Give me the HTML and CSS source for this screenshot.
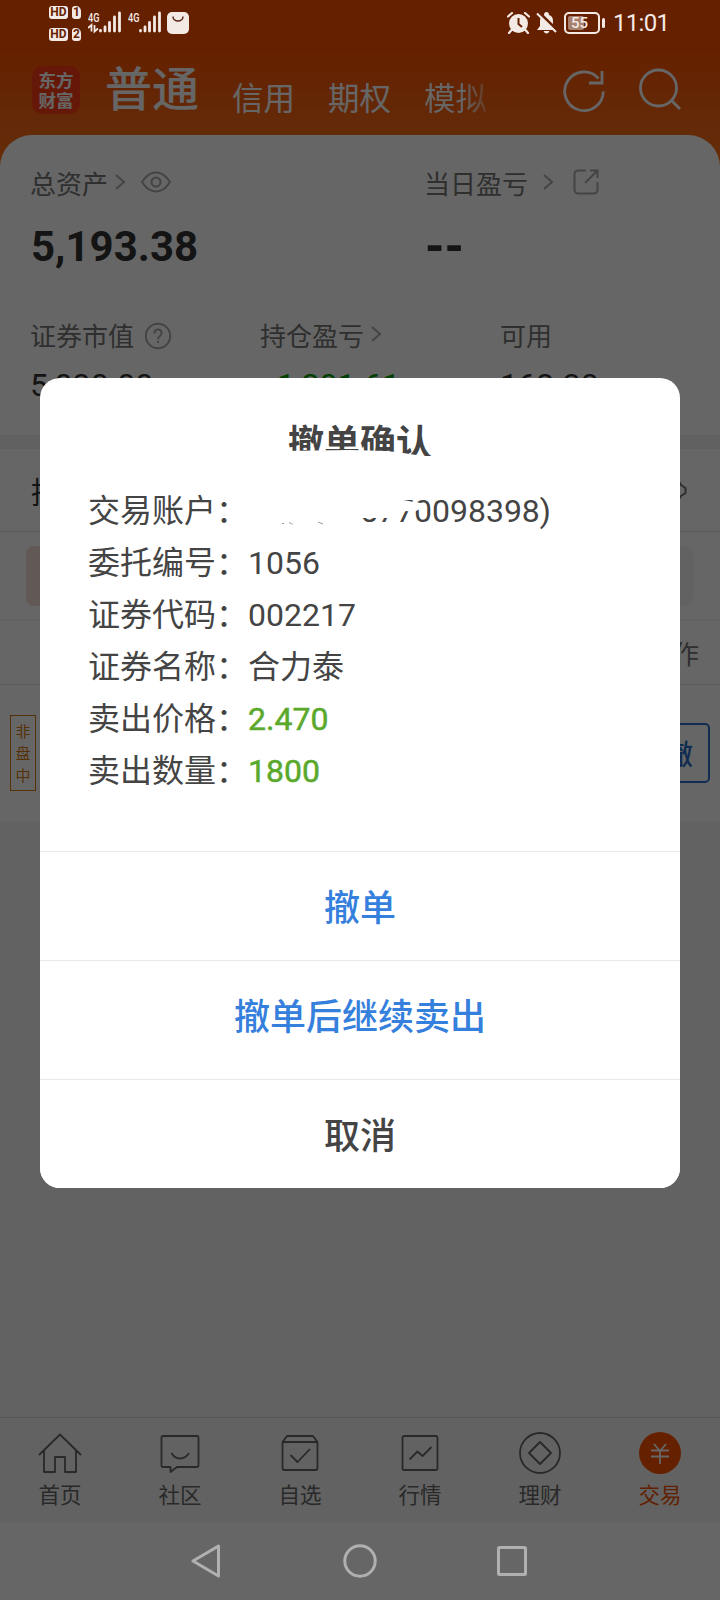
FILE: index.html
```html
<!DOCTYPE html>
<html lang="zh-CN">
  <head>
    <meta charset="UTF-8" />
    <meta name="viewport" content="width=device-width, initial-scale=1.0" />
    <title>撤单确认</title>
    <link rel="stylesheet" href="styles.css">
  </head>
  <body>
    <div class="phone">
      <div class="status-bar">
        <div class="hd-list">
          <div class="hd-row"><span class="hd">HD</span><span class="sim">1</span></div>
          <div class="hd-row"><span class="hd">HD</span><span class="sim">2</span></div>
        </div>
        <svg class="signal" width="34" height="24" viewBox="0 0 34 24">
          <text x="0" y="10.500" class="net" textLength="11.500" lengthAdjust="spacingAndGlyphs">4G</text>
          <path d="M0 17l3.500-3v6.500M6.500 14v6.500l3.500-3" fill="none" stroke="#f3e9e5" stroke-width="1.800" />
          <path d="M12.500 19.500v.5M17 16v4M21.500 11.500v8.500M26.500 6v14M31.500 2v18" class="bars" />
        </svg>
        <svg class="signal second" width="34" height="24" viewBox="0 0 34 24">
          <text x="0" y="10.500" class="net" textLength="11.500" lengthAdjust="spacingAndGlyphs">4G</text>
          <path d="M12.500 19.500v.5M17 16v4M21.500 11.500v8.500M26.500 6v14M31.500 2v18" class="bars" />
        </svg>
        <svg class="bag" width="22" height="22" viewBox="0 0 22 22">
          <rect width="22" height="22" rx="5" fill="#f3e9e5" />
          <path d="M6 4.500a5 4.500 0 0 0 10 0" fill="none" stroke="#5a2410" stroke-width="1.500" />
        </svg>
        <div class="status-right">
          <svg width="23" height="22" viewBox="0 0 23 22">
            <circle cx="11.500" cy="11.500" r="9.500" fill="#f3e9e5" />
            <path d="M1 4.500l4-3.500M22 4.500L18 1M4.500 18L2 21M18.500 18l2.500 3" stroke="#f3e9e5" stroke-width="2.200" stroke-linecap="round" />
            <path d="M11.500 6v6l3.500 3" fill="none" stroke="#662100" stroke-width="2" />
          </svg>
          <svg width="21" height="22" viewBox="0 0 21 22">
            <path d="M8 3Q8 0 10.500 0T13 3Q17 4 17 9v5l3 4H1l3-4V9q0-5 4-6z" fill="#f3e9e5" />
            <path d="M7.500 19h6q-1 2.500-3 2.500t-3-2.500z" fill="#f3e9e5" />
            <path d="M2.500 0L21 18" stroke="#662100" stroke-width="3" />
            <path d="M1 1.500L20 20" stroke="#f3e9e5" stroke-width="2" />
          </svg>
          <div class="battery"><span class="battery-level"></span><span class="battery-text">55</span></div>
          <span class="battery-tip"></span>
          <span class="time">11:01</span>
        </div>
      </div>

      <div class="header">
        <div class="logo"><span>东方</span><span>财富</span></div>
        <div class="tabs">
          <span class="tab active">普通</span>
          <span class="tab">信用</span>
          <span class="tab">期权</span>
          <span class="tab fade">模拟</span>
        </div>
        <svg class="refresh" width="44" height="44" viewBox="0 0 44 44">
          <path d="M36.500 9.500A19.300 19.300 0 1 0 41.300 22.500M40 2v12H27" />
        </svg>
        <svg class="search" width="44" height="44" viewBox="0 0 44 44">
          <circle cx="20.500" cy="20" r="18" />
          <path d="M33 32l9 9" />
        </svg>
      </div>

      <div class="assets">
        <div class="assets-top">
          <div class="asset total">
            <div class="label">总资产
              <svg class="arrow" width="12" height="18" viewBox="0 0 12 18"><path d="M2 2l8 7-8 7" /></svg>
              <svg class="eye" width="32" height="22" viewBox="0 0 32 22">
                <path d="M2 11Q8 1.500 16 1.500t14 9.500q-6 9.500-14 9.500T2 11z" /><circle cx="16" cy="11" r="4.500" />
              </svg>
            </div>
            <div class="big">5,193.38</div>
          </div>
          <div class="asset">
            <div class="label">当日盈亏
              <svg class="arrow wide" width="12" height="18" viewBox="0 0 12 18"><path d="M2 2l8 7-8 7" /></svg>
              <svg class="share" width="26" height="26" viewBox="0 0 26 26">
                <path d="M13 1.500H5A3.500 3.500 0 0 0 1.500 5v16A3.500 3.500 0 0 0 5 24.500h16a3.500 3.500 0 0 0 3.500-3.500v-8M12 14L24.500 1.500M17 1.500h7.500V9" />
              </svg>
            </div>
            <div class="big dashes">--</div>
          </div>
        </div>
        <div class="assets-bottom">
          <div>
            <div class="label">证券市值
              <svg class="help" width="28" height="28" viewBox="0 0 28 28">
                <circle cx="14" cy="14" r="12.200" />
                <path d="M10.500 11.500q0-4 3.500-4t3.500 3.500q0 2-2 3.300-1.500 1-1.500 3.200M14 19v2" />
              </svg>
            </div>
            <div class="value">5,030.00</div>
          </div>
          <div>
            <div class="label">持仓盈亏
              <svg class="arrow" width="12" height="18" viewBox="0 0 12 18"><path d="M2 2l8 7-8 7" /></svg>
            </div>
            <div class="value green">-1,201.61</div>
          </div>
          <div>
            <div class="label">可用</div>
            <div class="value">163.38</div>
          </div>
        </div>
      </div>

      <div class="section-title">
        <span>持仓</span>
        <svg width="28" height="28" viewBox="0 0 28 28"><path d="M2 14l4-9 8-3 7 5 1 2 4.500 3v5L22 20l-2 3-6 3-8-3z" /></svg>
      </div>
      <div class="filters"><span class="chip selected"></span><span class="chip"></span></div>
      <div class="table-head">操作</div>
      <div class="order-row">
        <div class="tag"><span>非</span><span>盘</span><span>中</span></div>
        <div class="cancel-btn">撤</div>
      </div>
      <div class="blank"></div>

      <div class="tabbar">
        <div class="item">
          <svg width="44" height="44" viewBox="0 0 44 44"><path d="M1 23L22 2.500 43 23M6 19v21h11V25h10v15h11V19" /></svg>
          <span>首页</span>
        </div>
        <div class="item">
          <svg width="44" height="44" viewBox="0 0 44 44"><path d="M5 4h34q1.500 0 1.500 1.500v28q0 1.500-1.500 1.500H19l-6.500 5v-5H5q-1.500 0-1.500-1.500v-28Q3.500 4 5 4zM13.500 21q3 5.500 8.500 5.500t9-5.500" /></svg>
          <span>社区</span>
        </div>
        <div class="item">
          <svg width="44" height="44" viewBox="0 0 44 44"><path d="M4.500 10L9 4h26l4.500 6v26q0 2-2 2h-31q-2 0-2-2zM4.500 10h35M12.500 23l7 7L32 17" /></svg>
          <span>自选</span>
        </div>
        <div class="item">
          <svg width="44" height="44" viewBox="0 0 44 44"><rect x="4.500" y="4" width="35" height="34" rx="1.500" /><path d="M11.500 27.500l8-8 5 4.500 9-9" /></svg>
          <span>行情</span>
        </div>
        <div class="item">
          <svg width="44" height="44" viewBox="0 0 44 44"><circle cx="22" cy="21" r="20" /><path d="M22 10l11 11-11 11-11-11z" /></svg>
          <span>理财</span>
        </div>
        <div class="item current">
          <svg width="44" height="44" viewBox="0 0 44 44"><circle class="disc" cx="22" cy="21" r="21" /><path class="yuan" d="M16 12l6 7 6-7M13 18.500h18M13 24.500h18M22 18v14" /></svg>
          <span>交易</span>
        </div>
      </div>

      <div class="system-nav">
        <svg width="34" height="36" viewBox="0 0 34 36"><path d="M27.500 3v30L2 18z" /></svg>
        <svg width="36" height="36" viewBox="0 0 36 36"><circle cx="18" cy="18" r="15.200" /></svg>
        <svg width="34" height="36" viewBox="0 0 34 36"><rect x="3.500" y="4.500" width="27" height="27" rx="1" /></svg>
      </div>

      <div class="mask"></div>

      <div class="dialog">
        <h2 class="dialog-title">撤单确认</h2>
        <div class="info">
          <div class="info-row"><span class="name">交易账户：</span><span class="num account">5770098398)
            <svg class="marks" width="111" height="44" viewBox="0 0 111 44"><path d="M34 38.500h2M41 37.500l2 1M44 38v1.500M70 37l5 2" /></svg>
            <svg class="eraser" width="68" height="44" viewBox="0 0 68 44"><path d="M0 0H42L44 14 60 17 67 18 66 24 60 27 52 26 46 28 36 33H0z" /></svg>
          </span></div>
          <div class="info-row"><span class="name">委托编号：</span><span class="num">1056</span></div>
          <div class="info-row"><span class="name">证券代码：</span><span class="num">002217</span></div>
          <div class="info-row"><span class="name">证券名称：</span><span>合力泰</span></div>
          <div class="info-row"><span class="name">卖出价格：</span><span class="num sell">2.470</span></div>
          <div class="info-row"><span class="name">卖出数量：</span><span class="num sell">1800</span></div>
        </div>
        <button class="action">撤单</button>
        <button class="action tall">撤单后继续卖出</button>
        <button class="action dismiss">取消</button>
      </div>
    </div>
  </body>
</html>
```
FILE: styles.css
```css
* {
  box-sizing: border-box;
}
body {
  margin: 0;
  font-family: "Noto Sans CJK SC", "Noto Sans", sans-serif;
  color: #333;
}
svg {
  display: block;
  flex: none;
}
.phone {
  position: relative;
  width: 720px;
  height: 1600px;
  display: flex;
  flex-direction: column;
  overflow: hidden;
  background: linear-gradient(#fd5200 0, #fd5200 50px, #f96c19 135px, #ff7010 170px);
}
.phone > div {
  flex: none;
}

/* Status bar stays above the mask */
.status-bar {
  position: relative;
  z-index: 2;
  height: 46px;
  display: flex;
  align-items: center;
  padding-left: 49px;
  color: #f3e9e5;
}
.hd-list {
  display: flex;
  flex-direction: column;
  gap: 9px;
}
.hd-row {
  display: flex;
  gap: 4px;
}
.hd,
.sim {
  height: 13px;
  border-radius: 3px;
  background: #f3e9e5;
  color: #662100;
  font: bold 12px/13px Roboto, sans-serif;
  text-align: center;
}
.hd {
  width: 19px;
}
.sim {
  width: 9px;
  border-top-right-radius: 5px;
}
.signal {
  margin-left: 7px;
}
.signal.second {
  margin-left: 6px;
}
.net {
  font: 500 13px Roboto, sans-serif;
  fill: #f3e9e5;
}
.bars {
  stroke: #f3e9e5;
  stroke-width: 2.8;
  stroke-linecap: round;
}
.bag {
  margin-left: 5px;
}
.status-right {
  display: flex;
  align-items: center;
  margin-left: auto;
  padding-right: 51px;
}
.status-right svg {
  margin-right: 6px;
}
.battery {
  display: flex;
  align-items: center;
  width: 36px;
  height: 22px;
  margin-left: 1px;
  padding: 2px;
  border: 2px solid #f3e9e5;
  border-radius: 5px;
}
.battery-level {
  width: 16px;
  height: 14px;
  border-radius: 2px;
  background: #a8806e;
}
.battery-text {
  margin-left: -13px;
  font: 500 15px/16px Roboto, sans-serif;
}
.battery-tip {
  width: 3px;
  height: 10px;
  margin-left: 2px;
  border-radius: 2px;
  background: #f3e9e5;
}
.time {
  width: 56px;
  margin-left: 8px;
  font: 24px/30px Roboto, sans-serif;
  letter-spacing: -0.7px;
}

.header {
  height: 89px;
  display: flex;
  padding: 20px 38px 0 32px;
  color: #fff;
}
.logo {
  width: 48px;
  height: 48px;
  padding-top: 4px;
  border-radius: 10px;
  background: #ff3c14;
  display: flex;
  flex-direction: column;
  align-items: center;
  font-size: 17.5px;
  font-weight: bold;
  line-height: 20px;
}
.tabs {
  display: flex;
  align-items: flex-end;
  gap: 33px;
  height: 47px;
  margin-left: 25px;
}
.tab {
  font-size: 31.5px;
  line-height: 34px;
}
.tab.active {
  font-size: 47px;
  font-weight: 500;
  line-height: 54px;
}
.tab.fade {
  background: linear-gradient(90deg, #fff 60%, rgba(255, 255, 255, 0.3));
  background-clip: text;
  color: transparent;
}
.refresh,
.search {
  fill: none;
  stroke: #fff;
  stroke-width: 2.8;
}
.refresh {
  margin: 3px 0 0 auto;
}
.search {
  margin: 2px 0 0 32px;
}

.assets {
  height: 314px;
  padding: 27px 31px 0 30px;
  border-bottom: 14px solid #f2f2f2;
  border-radius: 32px 32px 0 0;
  background: #fff;
}
.assets-top {
  display: flex;
  height: 152px;
}
.asset.total {
  width: 394px;
}
.label {
  display: flex;
  align-items: center;
  height: 40px;
  color: #757575;
  font-size: 26px;
}
.label svg,
.section-title svg {
  fill: none;
  stroke: #aaa;
  stroke-width: 2;
}
.arrow {
  margin-left: 6px;
}
.arrow.wide {
  margin-left: 14px;
}
.eye {
  margin-left: 14px;
}
.share {
  margin-left: 19px;
}
.help {
  margin: 3px 0 0 10px;
}
.big {
  margin: 15px 0 0 1px;
  font: bold 42px/60px Roboto, sans-serif;
}
.big.dashes {
  font-size: 52px;
  transform: scaleX(0.95);
  transform-origin: left;
}
.assets-bottom {
  display: grid;
  grid-template-columns: 230px 240px auto;
}
.value {
  margin-top: 8px;
  font: 32px/46px Roboto, sans-serif;
  letter-spacing: 0.1px;
}
.green {
  padding-left: 8px;
  color: #00a000;
}

.section-title {
  display: flex;
  align-items: center;
  justify-content: space-between;
  height: 83px;
  padding: 0 33px 0 31px;
  border-bottom: 1px solid #ddd;
  background: #fff;
  font-size: 30px;
}
.section-title svg {
  stroke: #777;
}
.filters {
  display: flex;
  justify-content: space-between;
  height: 87px;
  padding: 14px 26px 0;
  background: #fff;
}
.chip {
  width: 160px;
  height: 60px;
  border-radius: 8px;
  background: #f6f6f6;
}
.chip.selected {
  background: #f5dfd8;
}
.table-head {
  height: 66px;
  padding-right: 21px;
  border-top: 1px solid #f2f2f2;
  border-bottom: 1px solid #e6e6e6;
  background: #fff;
  color: #757575;
  font-size: 26px;
  line-height: 65px;
  text-align: right;
}
.order-row {
  display: flex;
  justify-content: space-between;
  align-items: center;
  height: 136px;
  padding: 0 10px;
  background: #fff;
}
.tag {
  display: flex;
  flex-direction: column;
  align-items: center;
  width: 26px;
  height: 76px;
  padding-top: 4px;
  border: 1px solid #d67b12;
  color: #d67b12;
  font-size: 15px;
  line-height: 22px;
}
.cancel-btn {
  width: 80px;
  height: 60px;
  border: 2px solid #2b6fc8;
  border-radius: 5px;
  color: #2b6fc8;
  font-size: 28px;
  font-weight: 500;
  line-height: 57px;
  padding-right: 15px;
  text-align: right;
}
.blank {
  height: 596px;
  background: #f5f5f5;
}

.tabbar {
  display: grid;
  grid-template-columns: repeat(6, 120px);
  height: 105px;
  border-top: 1px solid #dcdcdc;
  background: #f6f6f6;
}
.item {
  display: flex;
  flex-direction: column;
  align-items: center;
  padding-top: 14px;
  color: #666;
  font-size: 21.5px;
  line-height: 30px;
}
.item svg {
  margin-bottom: 3px;
  fill: none;
  stroke: #666;
  stroke-width: 1.8;
  stroke-linejoin: round;
}
.item.current {
  color: #f25000;
}
.item .disc {
  fill: #fd5200;
  stroke: none;
}
.item .yuan {
  stroke: #fff;
}

.system-nav {
  position: relative;
  z-index: 2;
  display: flex;
  justify-content: center;
  align-items: center;
  gap: 117px;
  height: 78px;
  background: #666;
}
.system-nav svg {
  fill: none;
  stroke: #b0b0b0;
  stroke-width: 3;
  stroke-linejoin: round;
}

/* Dark layer under the dialog */
.mask {
  position: absolute;
  inset: 0;
  z-index: 1;
  background: rgba(0, 0, 0, 0.6);
}
.dialog {
  position: absolute;
  z-index: 3;
  top: 378px;
  left: 40px;
  width: 640px;
  height: 810px;
  overflow: hidden;
  border-radius: 20px;
  background: #fff;
  color: #444;
}
.dialog-title {
  height: 54px;
  margin: 35px 0 0;
  font-size: 36px;
  line-height: 54px;
  text-align: center;
  /* lower part of the title is wiped out */
  clip-path: polygon(0 0, 100% 0, 100% 43px, 382px 43px, 370px 41px, 356px 39px, 345px 38px, 310px 37px, 240px 38px, 0 38px);
}
.info {
  height: 384px;
  padding: 15px 0 0 48px;
}
.info-row {
  display: flex;
  align-items: baseline;
  height: 52px;
  font-size: 32px;
  line-height: 52px;
}
.name {
  width: 160px;
}
.num {
  font-family: Roboto, sans-serif;
}
.account {
  position: relative;
  padding-left: 112px;
}
.marks {
  position: absolute;
  top: 0;
  left: 0;
  stroke: #999;
  stroke-width: 1;
}
.eraser {
  position: absolute;
  top: 0;
  left: 106px;
  fill: #fff;
}
.sell {
  color: #5aa92c;
  -webkit-text-stroke: 0.5px #5aa92c;
}
.action {
  display: block;
  width: 100%;
  height: 109px;
  padding: 0 0 2px;
  border: none;
  border-top: 1px solid #e8e8e8;
  background: #fff;
  color: #3580dc;
  font-family: inherit;
  font-size: 36px;
  font-weight: 500;
}
.action.tall {
  height: 119px;
  padding-bottom: 12px;
}
.action.dismiss {
  color: #444;
}
```
